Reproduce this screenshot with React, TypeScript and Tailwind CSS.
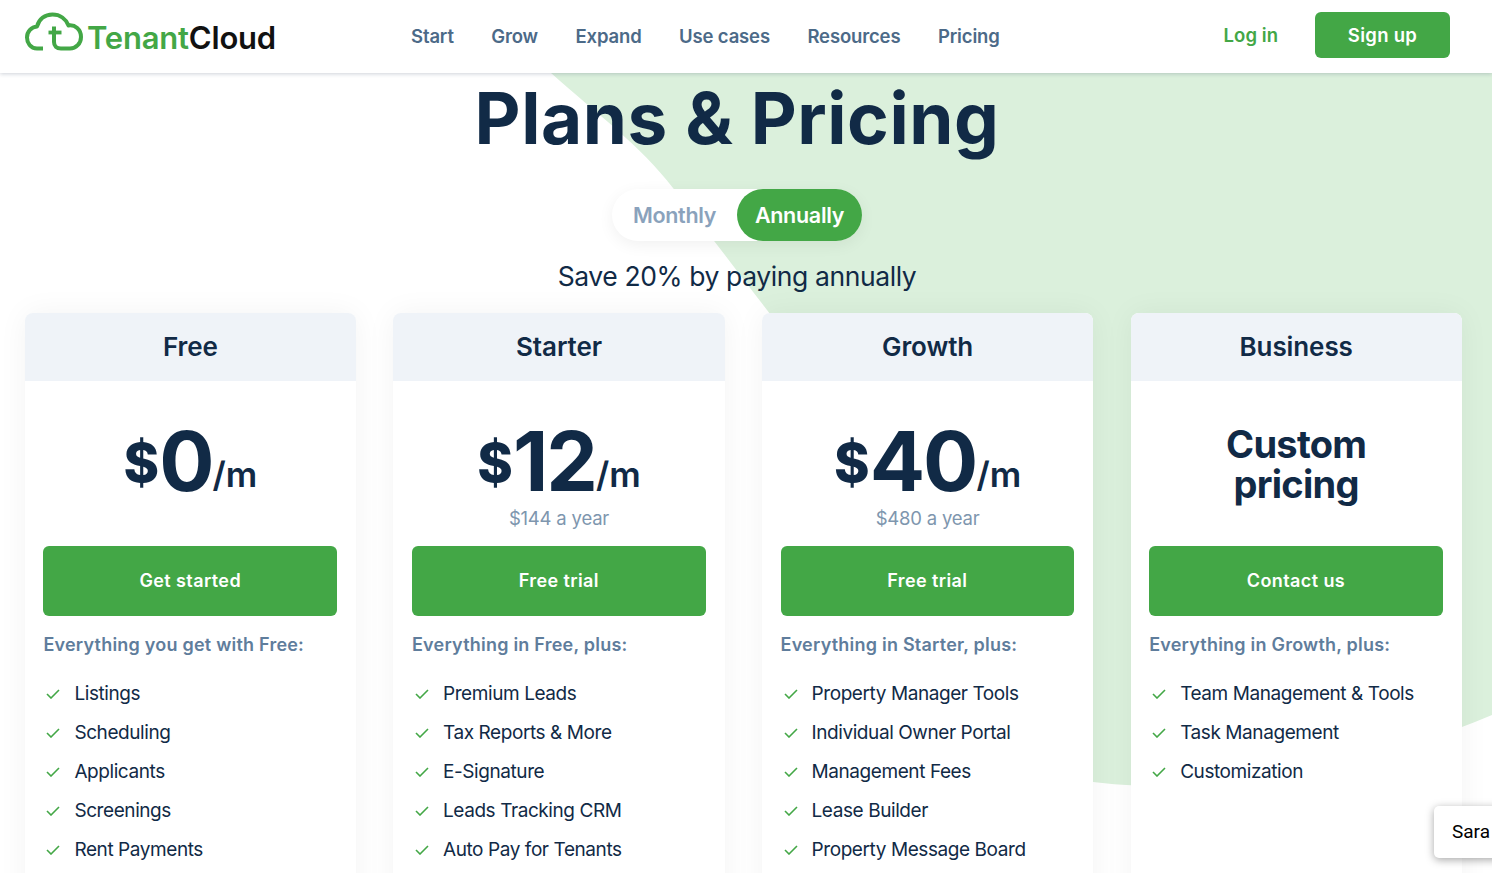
import React from "react";

const nav = ["Start", "Grow", "Expand", "Use cases", "Resources", "Pricing"];

type Plan = { name: string; price?: string; year?: string; cta: string; lead: string; items: string[] };
const plans: Plan[] = [
  { name: "Free", price: "0", cta: "Get started", lead: "Everything you get with Free:", items: ["Listings", "Scheduling", "Applicants", "Screenings", "Rent Payments"] },
  { name: "Starter", price: "12", year: "$144 a year", cta: "Free trial", lead: "Everything in Free, plus:", items: ["Premium Leads", "Tax Reports & More", "E-Signature", "Leads Tracking CRM", "Auto Pay for Tenants"] },
  { name: "Growth", price: "40", year: "$480 a year", cta: "Free trial", lead: "Everything in Starter, plus:", items: ["Property Manager Tools", "Individual Owner Portal", "Management Fees", "Lease Builder", "Property Message Board"] },
  { name: "Business", cta: "Contact us", lead: "Everything in Growth, plus:", items: ["Team Management & Tools", "Task Management", "Customization"] },
];

function Logo() {
  return (
    <div className="flex items-center">
      <svg width="60" height="40" viewBox="0 0 60 40" fill="none" className="shrink-0 -mt-[11px]">
        <path d="M19 37.5H13C6.5 37.5 3 32 3 26.5C3 20.5 7.5 16 13 15.5C15 8 21 3.5 28.5 3.5C36 3.5 42 8 44.5 14.5C51 13.5 57 18.5 57 26C57 32.5 52 37.5 46 37.5H37C32.5 37.5 30 35 30 31V15.5" stroke="#43a746" strokeWidth="4" strokeLinejoin="round" />
        <path d="M24.5 21.5H37.5" stroke="#43a746" strokeWidth="3.8" />
      </svg>
      <span className="ml-[3px] text-[31px] font-semibold tracking-[-0.2px] leading-none mt-[2px]">
        <span className="text-[#43a746]">Tenant</span>
        <span className="text-[#111]">Cloud</span>
      </span>
    </div>
  );
}

function Check() {
  return (
    <svg width="14" height="10" viewBox="0 0 14 10" fill="none" className="shrink-0 -mt-[2px]">
      <path d="M1 5L5 9L13 1" stroke="#43a746" strokeWidth="1.6" />
    </svg>
  );
}

function Card({ plan }: { plan: Plan }) {
  return (
    <div className="bg-white rounded-t-[8px] shadow-[0_0_30px_rgba(0,0,0,0.05)] h-[600px]">
      <div className="h-[68px] pb-[2px] bg-[#eff3f8] rounded-t-[8px] flex items-center justify-center text-[26px] font-semibold tracking-[-0.1px] text-[#112a46]">
        {plan.name}
      </div>
      <div className="h-[165px] flex flex-col items-center">
        {plan.price ? (
          <>
            <div className="h-[124px] pt-[40px] flex items-baseline justify-center text-[#112a46] font-bold leading-none">
              <span className="text-[54px] font-extrabold -translate-y-[9px]">$</span>
              <span className="text-[82px] tracking-[-2px]">{plan.price}</span>
              <span className="text-[35px] font-semibold -translate-y-[4px]">/m</span>
            </div>
            {plan.year && <div className="text-[18.5px] tracking-[-0.2px] text-[#7e96ae]">{plan.year}</div>}
          </>
        ) : (
          <div className="pt-[43px] text-center text-[38px] leading-[40px] font-bold tracking-[-0.7px] text-[#112a46]">
            Custom
            <br />
            pricing
          </div>
        )}
      </div>
      <div className="pl-[18.6px] pr-[19px]">
        <div className="h-[70px] pb-[2px] bg-[#43a746] rounded-[6px] flex items-center justify-center text-white text-[18px] font-semibold tracking-[0.4px]">
          {plan.cta}
        </div>
        <div className="mt-[17px] h-[24px] leading-[24px] text-[18px] font-semibold tracking-[0.22px] text-[#5f7d9c] whitespace-nowrap">{plan.lead}</div>
        <ul className="mt-[18px] flex flex-col">
          {plan.items.map((it) => (
            <li key={it} className="h-[39px] flex items-center pl-[3px] gap-[14px] text-[19px] tracking-[-0.42px] text-[#112a46]">
              <Check />
              <span>{it}</span>
            </li>
          ))}
        </ul>
      </div>
    </div>
  );
}

export default function App() {
  return (
    <div className="relative h-[873px] overflow-hidden bg-white [font-family:Inter,sans-serif]">
      <svg className="absolute left-0 top-0" width="1492" height="873" viewBox="0 0 1492 873">
        <path d="M551 73C598 115 640 145 673 188C710 235 740 275 767 310C860 430 970 610 1093 782C1250 800 1370 765 1492 715V73Z" fill="#dbf0dc" />
      </svg>
      <header className="relative z-10 h-[73px] bg-white shadow-[0_1px_4px_rgba(30,50,80,0.22)] flex items-center pl-[24px]">
        <Logo />
        <nav className="ml-[135px] flex gap-[37.5px] text-[18.5px] font-semibold tracking-[-0.15px] text-[#4c6a88]">
          {nav.map((n) => (
            <span key={n}>{n}</span>
          ))}
        </nav>
        <span className="ml-auto text-[#43a746] text-[18.5px] font-semibold tracking-[0.05px] -mt-[2px]">Log in</span>
        <div className="ml-[37px] mr-[42px] w-[135px] h-[46px] -mt-[3px] pt-[1px] bg-[#43a746] rounded-[6px] flex items-center justify-center text-white text-[18.5px] font-semibold tracking-[0.3px]">
          Sign up
        </div>
      </header>

      <main className="relative">
        <div className="w-[1474px] flex flex-col items-center">
          <h1 className="mt-[5px] h-[80px] text-[71px] leading-[80px] font-bold tracking-[0.55px] text-[#112a46]">Plans &amp; Pricing</h1>
          <div className="mt-[31px] w-[250px] h-[52px] rounded-full bg-white shadow-[0_4px_16px_rgba(0,0,0,0.06)] flex items-center">
            <span className="w-[125px] text-center text-[21.5px] font-semibold tracking-[-0.3px] text-[#8aa2bc]">Monthly</span>
            <span className="w-[125px] h-[52px] rounded-full bg-[#43a746] text-white flex items-center justify-center text-[21.5px] font-semibold tracking-[-0.3px]">Annually</span>
          </div>
          <p className="mt-[17px] h-[36px] leading-[36px] text-[26.5px] tracking-[-0.4px] text-[#112a46]">Save 20% by paying annually</p>
        </div>
        <div className="mt-[19px] ml-[24.8px] w-[1437px] grid grid-cols-4 gap-[37.33px]">
          {plans.map((p) => (
            <Card key={p.name} plan={p} />
          ))}
        </div>
      </main>

      <div className="absolute left-[1434px] top-[806px] w-[80px] h-[52px] bg-white rounded-[5px] shadow-[0_2px_8px_rgba(0,0,0,0.35)] flex items-center pl-[18px] text-[19px] text-black [font-family:Roboto,sans-serif]">
        Sara
      </div>
    </div>
  );
}
